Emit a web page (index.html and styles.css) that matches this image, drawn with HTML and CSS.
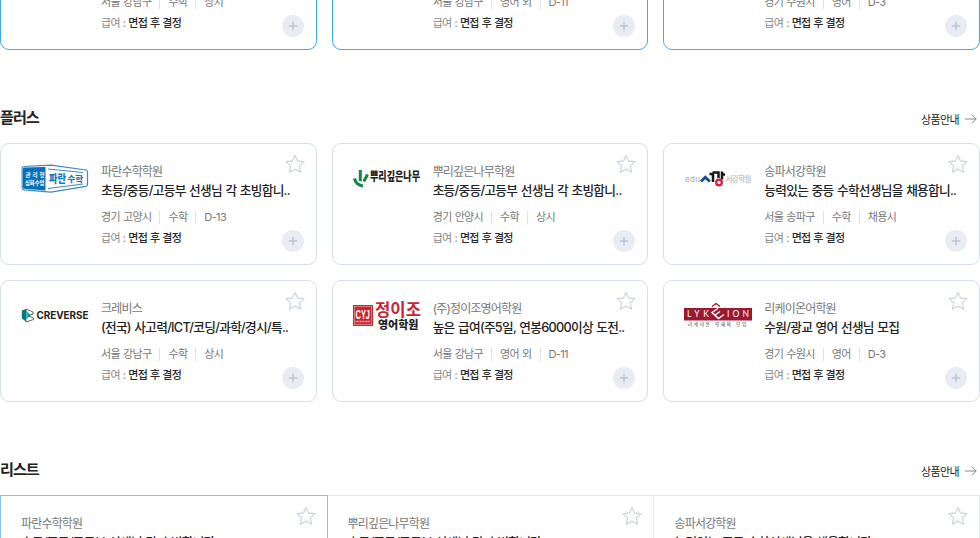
FILE: index.html
```html
<!DOCTYPE html>
<html lang="ko">
<head>
<meta charset="utf-8">
<title>채용</title>
<link rel="stylesheet" href="styles.css">
</head>
<body>
<svg class="defs" width="0" height="0">
  <symbol id="star" viewBox="0 0 20 20"><path d="M10 1.4 L12.6 7 L18.9 7.6 L14.3 11.9 L15.6 18.2 L10 15.1 L4.4 18.2 L5.7 11.9 L1.1 7.6 L7.4 7 Z" fill="none" stroke="#cfd6e1" stroke-width="1.3" stroke-linejoin="round"/></symbol>
  <symbol id="plus" viewBox="0 0 22 22"><circle cx="11" cy="11" r="11" fill="#e9ecf4"/><path d="M11 6.800v8.400M6.800 11h8.400" stroke="#bfc4ce" stroke-width="1.500" fill="none"/></symbol>
  <symbol id="arrow" viewBox="0 0 12 10"><path d="M0 5h11M7 .8L11.2 5L7 9.2" fill="none" stroke="#888" stroke-width="1"/></symbol>
</svg>
<main class="page">
  <section class="grid premium">
    <article class="card">
      <div class="logo"></div>
      <div class="info"><p class="name">크레비스</p><h3 class="title">(전국) 사고력/ICT/코딩/과학/경시/특..</h3><p class="meta"><span>서울 강남구</span><span>수학</span><span>상시</span></p><p class="pay">급여 : <b>면접 후 결정</b></p></div>
      <svg class="plus"><use href="#plus"/></svg>
    </article>
    <article class="card">
      <div class="logo"></div>
      <div class="info"><p class="name">(주)정이조영어학원</p><h3 class="title">높은 급여(주5일, 연봉6000이상 도전..</h3><p class="meta"><span>서울 강남구</span><span>영어 외</span><span>D-11</span></p><p class="pay">급여 : <b>면접 후 결정</b></p></div>
      <svg class="plus"><use href="#plus"/></svg>
    </article>
    <article class="card">
      <div class="logo"></div>
      <div class="info"><p class="name">리케이온어학원</p><h3 class="title">수원/광교 영어 선생님 모집</h3><p class="meta"><span>경기 수원시</span><span>영어</span><span>D-3</span></p><p class="pay">급여 : <b>면접 후 결정</b></p></div>
      <svg class="plus"><use href="#plus"/></svg>
    </article>
  </section>

  <header class="head"><h2>플러스</h2><a class="guide">상품안내<svg class="arrow"><use href="#arrow"/></svg></a></header>
  <section class="grid">
    <article class="card">
      <svg class="logo" viewBox="0 0 68 34">
        <path d="M3 4.5L30 3.2L65 8Q66.500 8.400 66.500 10V22.500Q66.500 24 65 24.300L30 30.200L3 27.800Q1.200 27.500 1.200 26V6Q1.200 4.700 3 4.500Z" fill="#fff" stroke="#3d89bf" stroke-width="1.2"/>
        <path d="M3 5.500L24.500 5V28.500L3 26.700Q2 26.500 2 25V7Q2 5.700 3 5.500Z" fill="#0870b8"/>
        <path d="M27 7L62 10.500M27 26.500L62 22" stroke="#3d89bf" stroke-width="1"/>
        <text x="4.500" y="14.500" font-size="5.500" font-weight="700" fill="#fff" textLength="19">관리형</text>
        <text x="4" y="22.500" font-size="5.500" font-weight="700" fill="#fff" textLength="19.500" lengthAdjust="spacingAndGlyphs">심화수업</text>
        <text x="28" y="21" font-size="11" font-weight="900" fill="#1678bc" textLength="17" lengthAdjust="spacingAndGlyphs">파란</text>
        <text x="46.500" y="20" font-size="8.500" font-weight="900" fill="#1678bc" textLength="15.500">수학</text>
      </svg>
      <div class="info"><p class="name">파란수학학원</p><h3 class="title">초등/중등/고등부 선생님 각 초빙합니..</h3><p class="meta"><span>경기 고양시</span><span>수학</span><span>D-13</span></p><p class="pay">급여 : <b>면접 후 결정</b></p></div>
      <svg class="star"><use href="#star"/></svg><svg class="plus"><use href="#plus"/></svg>
    </article>
    <article class="card">
      <svg class="logo" viewBox="0 0 68 34">
        <path d="M1.500 16.500Q3 23 10 24" fill="none" stroke="#168548" stroke-width="3.200"/>
        <path d="M7.300 8V19M14.500 12.500L10.800 19.500" fill="none" stroke="#168548" stroke-width="3"/>
        <text x="17" y="19" font-size="12" font-weight="900" fill="#222" textLength="50" lengthAdjust="spacingAndGlyphs">뿌리깊은나무</text>
      </svg>
      <div class="info"><p class="name">뿌리깊은나무학원</p><h3 class="title">초등/중등/고등부 선생님 각 초빙합니..</h3><p class="meta"><span>경기 안양시</span><span>수학</span><span>상시</span></p><p class="pay">급여 : <b>면접 후 결정</b></p></div>
      <svg class="star"><use href="#star"/></svg><svg class="plus"><use href="#plus"/></svg>
    </article>
    <article class="card">
      <svg class="logo" viewBox="0 0 68 34">
        <text x="1" y="20" font-size="8" fill="#aaa" textLength="15">edu</text>
        <path d="M17 19.500L21.300 15.300L25.800 19.500" fill="none" stroke="#174a91" stroke-width="2.800"/>
        <path d="M25.500 12H29V20M28.500 10.500H34.500V16M38 9.500V17.500M37 12.500H41" fill="none" stroke="#171717" stroke-width="2.500"/>
        <circle cx="35" cy="20.500" r="2.800" fill="none" stroke="#dc1831" stroke-width="2.200"/>
        <text x="41.500" y="20" font-size="7.500" fill="#aaa" textLength="26">서강학원</text>
      </svg>
      <div class="info"><p class="name">송파서강학원</p><h3 class="title">능력있는 중등 수학선생님을 채용합니..</h3><p class="meta"><span>서울 송파구</span><span>수학</span><span>채용시</span></p><p class="pay">급여 : <b>면접 후 결정</b></p></div>
      <svg class="star"><use href="#star"/></svg><svg class="plus"><use href="#plus"/></svg>
    </article>
    <article class="card">
      <svg class="logo" viewBox="0 0 68 34">
        <path d="M.800 11.500L5 10V22.500L.800 19.500Z" fill="#0b7778"/><path d="M5 11.500L10 16L5 20.500Z" fill="#20bdb5"/>
        <path d="M5 12.500V10L12 13V15L7 17L12.500 19V20.500L5 23V20.500" fill="none" stroke="#555" stroke-width=".9"/>
        <text x="15.500" y="20.300" font-size="9.800" font-weight="700" fill="#222" textLength="52" lengthAdjust="spacingAndGlyphs">CREVERSE</text>
      </svg>
      <div class="info"><p class="name">크레비스</p><h3 class="title">(전국) 사고력/ICT/코딩/과학/경시/특..</h3><p class="meta"><span>서울 강남구</span><span>수학</span><span>상시</span></p><p class="pay">급여 : <b>면접 후 결정</b></p></div>
      <svg class="star"><use href="#star"/></svg><svg class="plus"><use href="#plus"/></svg>
    </article>
    <article class="card">
      <svg class="logo" viewBox="0 0 68 34">
        <rect x="0" y="6" width="20" height="21" fill="#c72932"/><rect x="1.300" y="7.300" width="17.400" height="18.400" fill="none" stroke="#eba9ac" stroke-width=".6"/>
        <text class="narrow" x="2.500" y="19.500" font-size="13" font-weight="700" fill="#fff" textLength="14.500" lengthAdjust="spacingAndGlyphs">CYJ</text>
        <path d="M2.500 22.600H17" stroke="#efb5b7" stroke-width="1.500" stroke-dasharray="1 .5"/>
        <text x="22" y="17" font-size="16.500" font-weight="700" fill="#c9242f" textLength="46" lengthAdjust="spacingAndGlyphs">정이조</text>
        <text x="25" y="29.500" font-size="11" font-weight="900" fill="#222" textLength="40.500" lengthAdjust="spacingAndGlyphs">영어학원</text>
      </svg>
      <div class="info"><p class="name">(주)정이조영어학원</p><h3 class="title">높은 급여(주5일, 연봉6000이상 도전..</h3><p class="meta"><span>서울 강남구</span><span>영어 외</span><span>D-11</span></p><p class="pay">급여 : <b>면접 후 결정</b></p></div>
      <svg class="star"><use href="#star"/></svg><svg class="plus"><use href="#plus"/></svg>
    </article>
    <article class="card">
      <svg class="logo" viewBox="0 0 68 34">
        <rect y="9" width="68" height="12.500" fill="#9c1732"/>
        <text class="lato" x="3" y="18.300" font-size="8.500" fill="#fff" textLength="22">LYK</text><text class="lato" x="43" y="18.300" font-size="8.500" fill="#fff" textLength="22">ION</text>
        <path d="M28 7.500L32 4.500L36 7.500" fill="none" stroke="#9c1732" stroke-width="1.200"/>
        <path d="M34 9.500L28 13.500L34.500 19.500L40 15.500M31 16L36 12.500" fill="none" stroke="#fff" stroke-width="1.500"/>
        <text x="4" y="27" font-size="4.800" fill="#444" textLength="22">리케이온</text><text x="31" y="27" font-size="4.800" fill="#444" textLength="16">영재의</text><text x="52" y="27" font-size="4.800" fill="#444" textLength="10.500">모임</text>
      </svg>
      <div class="info"><p class="name">리케이온어학원</p><h3 class="title">수원/광교 영어 선생님 모집</h3><p class="meta"><span>경기 수원시</span><span>영어</span><span>D-3</span></p><p class="pay">급여 : <b>면접 후 결정</b></p></div>
      <svg class="star"><use href="#star"/></svg><svg class="plus"><use href="#plus"/></svg>
    </article>
  </section>

  <header class="head list-head"><h2>리스트</h2><a class="guide">상품안내<svg class="arrow"><use href="#arrow"/></svg></a></header>
  <section class="list">
    <article class="cell active"><p class="name">파란수학학원</p><h3 class="title">초등/중등/고등부 선생님 각 초빙합니다</h3><svg class="star"><use href="#star"/></svg></article>
    <article class="cell"><p class="name">뿌리깊은나무학원</p><h3 class="title">초등/중등/고등부 선생님 각 초빙합니다</h3><svg class="star"><use href="#star"/></svg></article>
    <article class="cell"><p class="name">송파서강학원</p><h3 class="title">능력있는 중등 수학선생님을 채용합니다</h3><svg class="star"><use href="#star"/></svg></article>
  </section>
</main>
</body>
</html>
```
FILE: styles.css
```css
* { box-sizing: border-box; }
html, body { margin: 0; height: 538px; overflow: hidden; background: #fff; }
body { font-family: Inter, "Noto Sans CJK KR", sans-serif; color: #222; }
h2, h3, p { margin: 0; }
.defs { position: absolute; }
.page { width: 980px; height: 538px; overflow: hidden; display: flex; flex-direction: column; justify-content: flex-start; }
.page > * { flex-shrink: 0; }
.grid { display: grid; grid-template-columns: repeat(3, 1fr); gap: 15px; }
.premium { margin-top: -72px; }
.card { position: relative; height: 122px; display: flex; padding: 18px 0 0 20px; border: 1px solid #d8dfea; border-radius: 9px; }
.premium .card { border-color: #49a8f2; }
.logo { width: 68px; height: 34px; margin-right: 12px; flex: none; }
.logo text { font-family: Inter, "Noto Sans CJK KR", sans-serif; }
.logo .narrow { font-family: "Liberation Sans", sans-serif; }
.logo .lato { font-family: Lato, sans-serif; }
.info { padding-top: 1px; white-space: nowrap; }
.name { font-size: 12px; line-height: 18px; letter-spacing: -.83px; color: #777; }
.title { font-size: 12.7px; line-height: 20px; letter-spacing: -.72px; word-spacing: .8px; font-weight: 500; color: #222; }
.meta { display: flex; margin-top: 8px; font-size: 11px; line-height: 16px; letter-spacing: -.65px; word-spacing: .6px; color: #777; }
.meta span + span { display: flex; align-items: center; margin-left: 8px; }
.meta span + span::before { content: ""; width: 1px; height: 13px; margin-right: 8px; background: #dfe2e8; }
.pay { margin-top: 5px; font-size: 11px; line-height: 16px; letter-spacing: -.7px; word-spacing: .6px; color: #888; }
.pay b { font-weight: 500; color: #2b2b2b; }
.star { position: absolute; width: 20px; height: 20px; top: 10px; right: 11px; }
.plus { position: absolute; width: 22px; height: 22px; right: 12px; bottom: 12px; }
.head { display: flex; justify-content: space-between; height: 93px; padding-top: 54px; }
.head h2 { font-size: 15.2px; line-height: 28px; font-weight: 700; letter-spacing: -1.05px; }
.guide { display: flex; align-items: center; height: 30px; padding-right: 3px; font-size: 11px; letter-spacing: -.6px; color: #222; }
.arrow { width: 12px; height: 10px; margin-left: 6px; }
.list { display: grid; grid-template-columns: 327px 327px 326px; height: 140px; }
.cell { position: relative; padding: 19px 0 0 20.5px; border: 1px solid #e3e6ed; border-left: 0; white-space: nowrap; }
.cell.active { z-index: 1; margin-right: -1px; padding-left: 20px; border: 1px solid #8fbfee; }
```
